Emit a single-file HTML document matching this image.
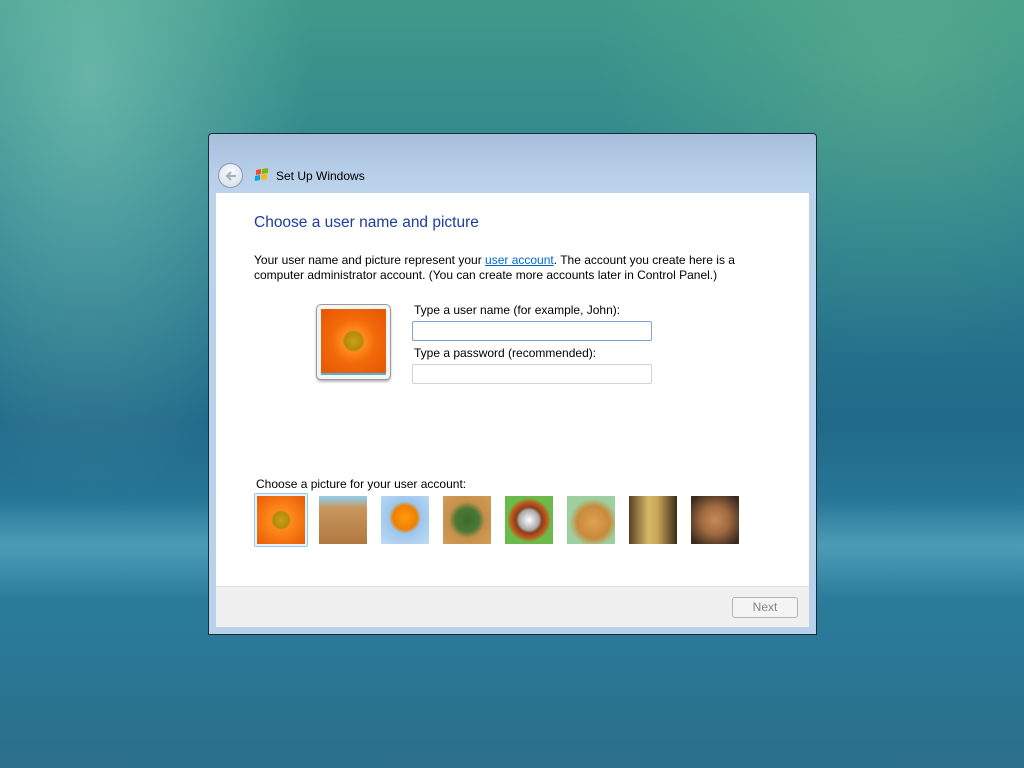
<!DOCTYPE html>
<html><head><style>
*{margin:0;padding:0;box-sizing:border-box}
body{width:1024px;height:768px;overflow:hidden;position:relative;font-family:"Liberation Sans",sans-serif;font-size:12px;color:#000;
background:
radial-gradient(ellipse 220px 420px at 90px 80px,rgba(140,210,190,.55),transparent),
radial-gradient(ellipse 300px 300px at 900px 60px,rgba(110,190,140,.45),transparent),
linear-gradient(180deg,rgba(0,0,0,0) 0,rgba(0,0,0,0) 500px,rgba(140,210,225,.35) 545px,rgba(0,0,0,0) 600px),
linear-gradient(180deg,#3f9a8a 0%,#2b7f8f 30%,#21698a 55%,#2a7fa0 72%,#2a7896 85%,#2b6f8a 100%);}
.a{position:absolute}
.win{left:208px;top:133px;width:609px;height:502px;border:1px solid #1a2a38;border-radius:4px 4px 0 0;background:linear-gradient(180deg,#a6bedb 0,#b8cfe9 40px,#bcd3ec 60px,#b9d1ea 100%)}
.content{left:216px;top:193px;width:593px;height:393px;background:#fff}
.foot{left:216px;top:586px;width:593px;height:41px;background:#f0f0f0;border-top:1px solid #dfdfdf}
.thumb{width:48px;height:48px;top:496px}
.inp{left:412px;width:240px;height:20px;background:#fff;border:1px solid #abadb3;border-radius:2px}
</style></head><body>
<div class="a win"></div>
<div class="a" style="left:218px;top:163px;width:25px;height:25px;border-radius:50%;border:1px solid #8a9bb0;background:radial-gradient(circle at 50% 35%,#fafcff,#d3dbe6)"></div>
<svg class="a" style="left:222px;top:167px" width="18" height="18"><path d="M14 9H5M9 5L5 9l4 4" stroke="#a7b3c2" stroke-width="2.2" fill="none"/></svg>
<svg class="a" style="left:254px;top:167px" width="16" height="16"><path d="M2 3l5-1v5l-5 1z" fill="#f25022"/><path d="M8 2l6-1v5l-6 1z" fill="#7fba00"/><path d="M1 9l5-1v5l-5 1z" fill="#00a4ef"/><path d="M7 8l6-1v5l-6 1z" fill="#ffb900"/></svg>
<div class="a" style="left:276px;top:169px;font-size:12px">Set Up Windows</div>
<div class="a content"></div>
<div class="a foot"></div>
<div class="a" style="left:254px;top:214px;font-size:15.5px;color:#1e3c9b">Choose a user name and picture</div>
<div class="a" style="left:254px;top:253px;line-height:15px;width:520px">Your user name and picture represent your <span style="color:#0066cc;text-decoration:underline">user account</span>. The account you create here is a computer administrator account. (You can create more accounts later in Control Panel.)</div>
<div class="a" style="left:316px;top:304px;width:75px;height:76px;border:1px solid #9a9a9a;border-radius:5px;background:#f4f4f4;box-shadow:0 2px 2px #bbb"></div>
<div class="a" style="left:321px;top:309px;width:65px;height:66px;background:radial-gradient(circle at 50% 50%,#c9a312 0,#b38a0c 9px,#ff8a1c 11px,#f26a0a 22px,#e85a05 40px);border-bottom:2px solid #4fb5d8"></div>
<div class="a" style="left:414px;top:303px">Type a user name (for example, John):</div>
<div class="a inp" style="top:321px;border-color:#7da2ce"></div>
<div class="a" style="left:414px;top:346px">Type a password (recommended):</div>
<div class="a inp" style="top:364px;border-color:#d0d3d8"></div>
<div class="a" style="left:256px;top:477px">Choose a picture for your user account:</div>
<div class="a" style="left:254px;top:493px;width:54px;height:54px;border:1px solid #8fc8ec;border-radius:2px;background:#e8f4fb"></div>
<div class="a thumb" style="left:257px;background:radial-gradient(circle,#c9a312 0,#b38a0c 8px,#ff8a1c 10px,#e85a05 34px)"></div>
<div class="a thumb" style="left:319px;background:linear-gradient(180deg,#8fd0f0 0,#c8975e 25%,#b07840 100%)"></div>
<div class="a thumb" style="left:381px;background:radial-gradient(circle at 50% 45%,#ff9a10 0,#f08000 12px,#9cc6ec 16px,#c8e0f4 40px)"></div>
<div class="a thumb" style="left:443px;background:radial-gradient(ellipse at 50% 50%,#3d6a2a 0,#4c7a35 12px,#c68f4c 18px,#d9a45e 40px)"></div>
<div class="a thumb" style="left:505px;background:radial-gradient(circle at 50% 50%,#fff 0,#aaa 10px,#8b3d1a 13px,#c05a1c 18px,#6cbb4a 22px)"></div>
<div class="a thumb" style="left:567px;background:radial-gradient(ellipse at 55% 55%,#e0a050 0,#c98a3b 16px,#9fcfa0 24px)"></div>
<div class="a thumb" style="left:629px;background:linear-gradient(90deg,#5a4020,#d8b868 40%,#c9a55a 60%,#3a2a18)"></div>
<div class="a thumb" style="left:691px;background:radial-gradient(circle at 50% 50%,#c88a58 0,#a06a40 14px,#3a2a20 30px)"></div>
<div class="a" style="left:732px;top:597px;width:66px;height:21px;border:1px solid #b5b5b5;border-radius:3px;background:#f4f4f4;color:#838383;text-align:center;line-height:19px">Next</div>
</body></html>
